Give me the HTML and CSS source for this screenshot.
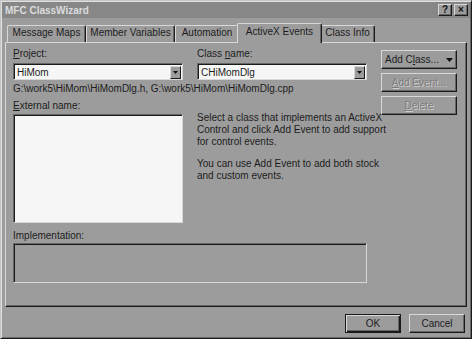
FILE: index.html
```html
<!DOCTYPE html>
<html lang="en">
<head>
	<meta charset="UTF-8">
	<title>MFC ClassWizard</title>
	<link rel="stylesheet" href="styles.css">
</head>
<body>
	<div class="window">
		<div class="titlebar">
			<span class="title">MFC ClassWizard</span>
			<div class="caption-btns">
				<span class="cap-btn">?</span>
				<span class="cap-btn">&#215;</span>
			</div>
		</div>
		<div class="client">
			<div class="tabs">
				<div class="tab tab-mm">Message Maps</div>
				<div class="tab tab-mv">Member Variables</div>
				<div class="tab tab-au">Automation</div>
				<div class="tab tab-ax active">ActiveX Events</div>
				<div class="tab tab-ci">Class Info</div>
			</div>
			<div class="panel">
				<div class="main">
					<div class="fields">
						<div class="field">
							<div class="label"><u>P</u>roject:</div>
							<div class="combo">
								<span class="combo-text">HiMom</span>
								<span class="drop"><svg width="5" height="3" viewBox="0 0 5 3"><path d="M0 0h5L2.5 3z" fill="#111"/></svg></span>
							</div>
						</div>
						<div class="field">
							<div class="label">Class <u>n</u>ame:</div>
							<div class="combo">
								<span class="combo-text">CHiMomDlg</span>
								<span class="drop"><svg width="5" height="3" viewBox="0 0 5 3"><path d="M0 0h5L2.5 3z" fill="#111"/></svg></span>
							</div>
						</div>
					</div>
					<div class="path">G:\work5\HiMom\HiMomDlg.h, G:\work5\HiMom\HiMomDlg.cpp</div>
					<div class="middle">
						<div class="field">
							<div class="label label-ext"><u>E</u>xternal name:</div>
							<div class="listbox"></div>
						</div>
						<div class="desc">
							<p>Select a class that implements an ActiveX Control and click Add Event to add support for control events.</p>
							<p>You can use Add Event to add both stock and custom events.</p>
						</div>
					</div>
					<div class="label label-impl">Implementation:</div>
					<div class="impl"></div>
				</div>
				<div class="side">
					<div class="btn btn-add"><span>Add C<u>l</u>ass...</span><svg width="7" height="4" viewBox="0 0 7 4"><path d="M0 0h7L3.5 4z" fill="#111"/></svg></div>
					<div class="btn disabled"><span><u>A</u>dd Event...</span></div>
					<div class="btn disabled"><span><u>D</u>elete</span></div>
				</div>
			</div>
			<div class="footer">
				<div class="btn btn-default"><span>OK</span></div>
				<div class="btn btn-foot"><span>Cancel</span></div>
			</div>
		</div>
	</div>
</body>
</html>
```

FILE: styles.css
```css
*{
	box-sizing: border-box;
}
body{
	margin: 0;
	background: #9c9c9c;
	font-family: "Liberation Sans", Arial, sans-serif;
	font-size: 10px;
	color: #1c1c1c;
}
u{
	text-decoration: underline;
	text-underline-offset: 1px;
}
.window{
	width: 472px;
	height: 339px;
	background: #9c9c9c;
	border: 1px solid;
	border-color: #c4c4c4 #1a1a1a #1a1a1a #c4c4c4;
	box-shadow: inset 1px 1px #e0e0e0, inset -1px -1px #6a6a6a;
	padding: 1px;
}
.titlebar{
	height: 16px;
	background: #878787;
	display: flex;
	align-items: center;
	justify-content: space-between;
	padding: 0 2px 0 3px;
}
.title{
	font-weight: bold;
	font-size: 10px;
	color: #dcdcdc;
}
.caption-btns{
	display: flex;
	gap: 2px;
}
.cap-btn{
	width: 14px;
	height: 12px;
	background: #9c9c9c;
	border: 1px solid;
	border-color: #d8d8d8 #1a1a1a #1a1a1a #d8d8d8;
	box-shadow: inset -1px -1px #666;
	font-weight: bold;
	font-size: 10px;
	line-height: 10px;
	text-align: center;
	color: #111;
}
.client{
	padding: 5px 3px 0 3px;
}
.tabs{
	display: flex;
	height: 19px;
	padding-left: 2px;
	align-items: flex-end;
}
.tab{
	height: 17px;
	border: 1px solid;
	border-bottom: none;
	border-color: #d8d8d8 #1a1a1a #1a1a1a #d8d8d8;
	box-shadow: inset -1px 0 #666;
	border-radius: 2px 2px 0 0;
	text-align: center;
	line-height: 14px;
	background: #9c9c9c;
}
.tab-mm{ width: 79px; }
.tab-mv{ width: 89px; }
.tab-au{ width: 64px; }
.tab-ci{ width: 55px; }
.tab.active{
	width: 85px;
	height: 20px;
	margin: 0 -2px -1px;
	position: relative;
	z-index: 1;
	line-height: 16px;
}
.panel{
	height: 265px;
	border: 1px solid;
	border-color: #d8d8d8 #1a1a1a #1a1a1a #d8d8d8;
	box-shadow: inset -1px -1px #666;
	display: flex;
	padding: 4px 0 0 7px;
}
.main{
	width: 354px;
}
.fields, .middle{
	display: grid;
	grid-template-columns: 170px 170px;
	column-gap: 14px;
}
.label{
	line-height: 13px;
	height: 13px;
	margin-bottom: 3px;
}
.combo{
	height: 17px;
	background: #f6f6f6;
	border: 1px solid;
	border-color: #666 #d8d8d8 #d8d8d8 #666;
	box-shadow: inset 1px 1px #1a1a1a;
	display: flex;
	align-items: center;
	justify-content: space-between;
	padding: 1px 1px 0 3px;
}
.combo-text{
	line-height: 13px;
}
.drop{
	width: 11px;
	height: 13px;
	background: #9c9c9c;
	border: 1px solid;
	border-color: #d8d8d8 #1a1a1a #1a1a1a #d8d8d8;
	display: flex;
	align-items: center;
	justify-content: center;
}
.path{
	line-height: 13px;
	margin-top: 2px;
}
.middle{
	margin-top: 4px;
}
.label-ext{
	margin-bottom: 2px;
}
.listbox{
	height: 109px;
	background: #f6f6f6;
	border: 1px solid;
	border-color: #666 #d8d8d8 #d8d8d8 #666;
	box-shadow: inset 1px 1px #1a1a1a;
}
.desc{
	padding-top: 13px;
	line-height: 12px;
}
.desc p{
	margin: 0 0 10px;
	width: 190px;
}
.label-impl{
	margin: 6px 0 1px;
}
.impl{
	height: 40px;
	border: 1px solid;
	border-color: #666 #d8d8d8 #d8d8d8 #666;
	box-shadow: inset 1px 1px #1a1a1a;
}
.side{
	width: 76px;
	margin-left: 14px;
	padding-top: 3px;
	display: flex;
	flex-direction: column;
	gap: 4px;
}
.btn{
	height: 19px;
	border: 1px solid;
	border-color: #d8d8d8 #1a1a1a #1a1a1a #d8d8d8;
	box-shadow: inset -1px -1px #666;
	display: flex;
	align-items: center;
	justify-content: center;
	gap: 7px;
}
.disabled{
	color: #7c7c7c;
	text-shadow: 1px 1px #d0d0d0;
}
.footer{
	display: flex;
	justify-content: flex-end;
	gap: 8px;
	padding: 7px 2px 0 0;
}
.btn-foot{
	width: 56px;
}
.btn-default{
	width: 56px;
	border-color: #1a1a1a;
	box-shadow: inset 1px 1px #d8d8d8, inset -1px -1px #1a1a1a, inset -2px -2px #666;
}
```
